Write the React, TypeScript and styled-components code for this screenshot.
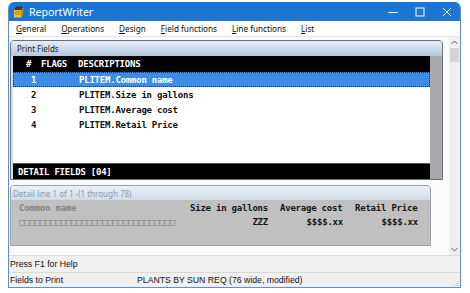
import React from "react";
import styled, { createGlobalStyle } from "styled-components";

const GlobalStyle = createGlobalStyle`
  html, body {
    margin: 0;
    padding: 0;
    background: #ffffff;
  }
  * {
    box-sizing: border-box;
  }
`;

const MONO = `"DejaVu Sans Mono", "Liberation Mono", monospace`;
const UI = `"Noto Sans", "Open Sans", sans-serif`;

const menuItems = [
  { key: "G", rest: "eneral" },
  { key: "O", rest: "perations" },
  { key: "D", rest: "esign" },
  { key: "F", rest: "ield functions" },
  { key: "L", rest: "ine functions" },
  { key: "L", rest: "ist" },
];

const fields = [
  "PLITEM.Common name",
  "PLITEM.Size in gallons",
  "PLITEM.Average cost",
  "PLITEM.Retail Price",
];

const AppIcon = () => (
  <svg width="11" height="12" viewBox="0 0 11 12">
    <path d="M3 0.5 L10.5 0.5 L8.5 4 L1 4 Z" fill="#3a3a3a" />
    <path d="M1 4 L8.5 4 L8.5 11.5 L1 11.5 Z" fill="#f2c21b" />
    <path d="M8.5 4 L10.5 0.5 L10.5 8 L8.5 11.5 Z" fill="#b58a08" />
    <path d="M2 6 H7.5 M2 8 H7.5" stroke="#9a7400" strokeWidth="0.8" />
  </svg>
);

const App = () => {
  return (
    <>
      <GlobalStyle />
      <Window>
        <TitleBar>
          <AppIcon />
          <TitleText>ReportWriter</TitleText>
          <TitleButtons>
            <CaptionButton>
              <svg width="10" height="10" viewBox="0 0 10 10">
                <path d="M0.5 5.5 H9.5" stroke="#fff" strokeWidth="1" />
              </svg>
            </CaptionButton>
            <CaptionButton>
              <svg width="10" height="10" viewBox="0 0 10 10">
                <rect x="1" y="1" width="8" height="8" fill="none" stroke="#fff" strokeWidth="1" />
              </svg>
            </CaptionButton>
            <CaptionButton>
              <svg width="10" height="10" viewBox="0 0 10 10">
                <path d="M1 1 L9 9 M9 1 L1 9" stroke="#fff" strokeWidth="1" />
              </svg>
            </CaptionButton>
          </TitleButtons>
        </TitleBar>

        <MenuBar>
          {menuItems.map((m, i) => (
            <MenuItem key={i}>
              <u>{m.key}</u>
              {m.rest}
            </MenuItem>
          ))}
        </MenuBar>

        <Client>
          <Content>
            <FieldsPanel>
              <PanelHeader>Print Fields</PanelHeader>
              <ListArea>
                <ListMain>
                  <ListHead>
                    <NumCell>#</NumCell>
                    <FlagsCell>FLAGS</FlagsCell>
                    <span>DESCRIPTIONS</span>
                  </ListHead>
                  <Rows>
                    {fields.map((f, i) => (
                      <FieldRow key={f} $selected={i === 0}>
                        <NumCell>{i + 1}</NumCell>
                        <FlagsCell />
                        <span>{f}</span>
                      </FieldRow>
                    ))}
                  </Rows>
                  <ListFoot>DETAIL FIELDS [04]</ListFoot>
                </ListMain>
                <SideStrip />
              </ListArea>
            </FieldsPanel>

            <DetailPanel>
              <DetailHeader>Detail line 1 of 1 -(1 through 78)</DetailHeader>
              <DetailBody>
                <DetailRow>
                  <Col $w={171} $muted>
                    Common name
                  </Col>
                  <Col $w={78}>Size in gallons</Col>
                  <Col $w={63} $gap={12}>
                    Average cost
                  </Col>
                  <Col $w={63} $gap={12}>
                    Retail Price
                  </Col>
                </DetailRow>
                <DetailRow>
                  <Col $w={171} $muted>
                    {"□".repeat(30)}
                  </Col>
                  <Col $w={78} $right>
                    ZZZ
                  </Col>
                  <Col $w={63} $gap={12} $right>
                    $$$$.xx
                  </Col>
                  <Col $w={63} $gap={12} $right>
                    $$$$.xx
                  </Col>
                </DetailRow>
              </DetailBody>
            </DetailPanel>
          </Content>

          <ScrollBar>
            <ScrollArrow>
              <svg width="7" height="5" viewBox="0 0 7 5">
                <path d="M0.5 4 L3.5 1 L6.5 4" fill="none" stroke="#606060" strokeWidth="1" />
              </svg>
            </ScrollArrow>
            <Thumb />
            <Track />
            <ScrollArrow>
              <svg width="7" height="5" viewBox="0 0 7 5">
                <path d="M0.5 1 L3.5 4 L6.5 1" fill="none" stroke="#606060" strokeWidth="1" />
              </svg>
            </ScrollArrow>
          </ScrollBar>
        </Client>

        <StatusBar>
          <StatusPane>Press F1 for Help</StatusPane>
        </StatusBar>
        <StatusBar $short>
          <StatusPane $w={127}>Fields to Print</StatusPane>
          <StatusPane>PLANTS BY SUN REQ (76 wide, modified)</StatusPane>
          <Grip>
            <svg width="8" height="8" viewBox="0 0 8 8">
              <rect x="6" y="2" width="1" height="1" fill="#b8b8b8" />
              <rect x="4" y="4" width="1" height="1" fill="#b8b8b8" />
              <rect x="6" y="4" width="1" height="1" fill="#b8b8b8" />
              <rect x="2" y="6" width="1" height="1" fill="#b8b8b8" />
              <rect x="4" y="6" width="1" height="1" fill="#b8b8b8" />
              <rect x="6" y="6" width="1" height="1" fill="#b8b8b8" />
            </svg>
          </Grip>
        </StatusBar>
      </Window>
    </>
  );
};

export default App;

const Window = styled.div`
  margin: 2px 0 0 8px;
  width: 453px;
  height: 286px;
  display: flex;
  flex-direction: column;
  border: 1px solid #5b8fcf;
  border-top: none;
  border-radius: 6px 6px 0 0;
  overflow: hidden;
  background: #fbfbfb;
`;

const TitleBar = styled.div`
  height: 19px;
  flex-shrink: 0;
  display: flex;
  align-items: center;
  padding-left: 4px;
  background: #1c74d3;
  color: #fff;
`;

const TitleText = styled.span`
  margin-left: 5px;
  font-family: ${UI};
  font-size: 10.5px;
`;

const TitleButtons = styled.div`
  margin-left: auto;
  display: flex;
  height: 100%;
`;

const CaptionButton = styled.div`
  width: 27px;
  height: 100%;
  display: flex;
  align-items: center;
  justify-content: center;
`;

const MenuBar = styled.div`
  height: 16px;
  flex-shrink: 0;
  display: flex;
  align-items: center;
  gap: 15px;
  padding-left: 7px;
  background: #fdfdfd;
  border-bottom: 1px solid #e4e4e4;
  font-family: ${UI};
  font-size: 8.2px;
  color: #111;

  u {
    text-underline-offset: 1px;
  }
`;

const MenuItem = styled.span`
  white-space: nowrap;
`;

const Client = styled.div`
  height: 218px;
  flex-shrink: 0;
  display: flex;
`;

const Content = styled.div`
  flex: 1;
  display: flex;
  flex-direction: column;
  gap: 5px;
  padding: 3px 0 0 1px;
`;

const FieldsPanel = styled.div`
  width: 433px;
  height: 140px;
  display: flex;
  flex-direction: column;
  border: 1px solid #66707c;
  border-radius: 4px 4px 0 0;
  overflow: hidden;
  background: #d7e0ea;
`;

const PanelHeader = styled.div`
  height: 15px;
  flex-shrink: 0;
  padding-left: 6px;
  display: flex;
  align-items: center;
  background: linear-gradient(#e6edf5, #b7c8db);
  font-family: ${UI};
  font-size: 8px;
  color: #1a1a1a;
`;

const ListArea = styled.div`
  flex: 1;
  display: flex;
  padding-left: 2px;
`;

const ListMain = styled.div`
  flex: 1;
  display: flex;
  flex-direction: column;
  font-family: ${MONO};
  font-weight: bold;
  font-size: 9px;
  letter-spacing: -0.22px;
  white-space: pre;
`;

const ListHead = styled.div`
  height: 16px;
  display: flex;
  align-items: center;
  background: #000;
  color: #fff;
`;

const NumCell = styled.span`
  width: 28px;
  padding-left: 13px;
`;

const FlagsCell = styled.span`
  width: 37px;
`;

const Rows = styled.div`
  flex: 1;
  background: #fff;
`;

const FieldRow = styled.div<{ $selected?: boolean }>`
  height: 15px;
  display: flex;
  align-items: center;
  color: ${(p) => (p.$selected ? "#fff" : "#111")};
  background: ${(p) => (p.$selected ? "#3d8de6" : "transparent")};
  border: 1px dotted ${(p) => (p.$selected ? "#2a2a2a" : "transparent")};

  ${NumCell} {
    padding-left: 17px;
  }
`;

const ListFoot = styled.div`
  height: 16px;
  display: flex;
  align-items: center;
  padding-left: 5px;
  background: #000;
  color: #fff;
  border-top: 1px solid #555;
`;

const SideStrip = styled.div`
  width: 12px;
  background: #a9a9a9;
`;

const DetailPanel = styled.div`
  width: 421px;
  height: 61px;
  display: flex;
  flex-direction: column;
  border: 1px solid #9aa1a9;
  border-radius: 4px 4px 0 0;
  overflow: hidden;
`;

const DetailHeader = styled.div`
  height: 14px;
  flex-shrink: 0;
  padding-left: 2px;
  display: flex;
  align-items: center;
  background: linear-gradient(#edf1f5, #d0dbe6);
  font-family: ${UI};
  font-size: 8px;
  color: #8d9aa8;
`;

const DetailBody = styled.div`
  flex: 1;
  padding: 1px 0 0 8px;
  background: #c0c0c0;
  font-family: ${MONO};
  font-weight: bold;
  font-size: 9px;
  letter-spacing: -0.22px;
  white-space: pre;
`;

const DetailRow = styled.div`
  height: 14px;
  display: flex;
  align-items: center;
`;

const Col = styled.span<{ $w: number; $gap?: number; $right?: boolean; $muted?: boolean }>`
  width: ${(p) => p.$w}px;
  margin-left: ${(p) => p.$gap ?? 0}px;
  text-align: ${(p) => (p.$right ? "right" : "left")};
  color: ${(p) => (p.$muted ? "#808080" : "#141414")};
  overflow: hidden;
`;

const ScrollBar = styled.div`
  width: 11px;
  display: flex;
  flex-direction: column;
  background: #f0f0f0;
`;

const ScrollArrow = styled.div`
  height: 11px;
  display: flex;
  align-items: center;
  justify-content: center;
`;

const Thumb = styled.div`
  height: 14px;
  margin: 0 1px;
  background: #d4d4d4;
`;

const Track = styled.div`
  flex: 1;
`;

const StatusBar = styled.div<{ $short?: boolean }>`
  height: ${(p) => (p.$short ? 15 : 17)}px;
  flex-shrink: 0;
  display: flex;
  align-items: center;
  padding-left: 1px;
  background: #f0f0f0;
  border-top: 1px solid #d9d9d9;
  font-family: "Liberation Sans", Arial, sans-serif;
  font-size: 8.7px;
  color: #111;
`;

const StatusPane = styled.span<{ $w?: number }>`
  width: ${(p) => (p.$w ? `${p.$w}px` : "auto")};
  white-space: nowrap;
`;

const Grip = styled.div`
  margin-left: auto;
  align-self: flex-end;
  display: flex;
`;
